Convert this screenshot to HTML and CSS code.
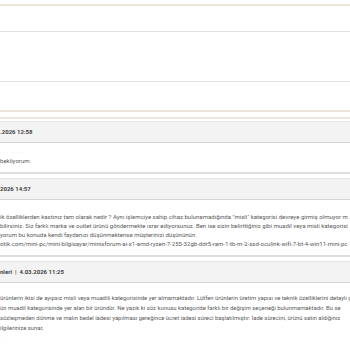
FILE: index.html
```html
<!DOCTYPE html>
<html lang="tr">
<head>
  <meta charset="UTF-8" />
  <title>Yorumlar</title>
  <link rel="stylesheet" href="styles.css">
</head>
<body>

  <!-- Reply form -->
  <div class="reply-form">
    <div class="line-beige"></div>
    <div class="field field-top"></div>
    <div class="field field-tall"></div>
    <div class="field field-last"></div>
    <div class="line-beige"></div>
    <div class="gap"></div>
    <div class="line-beige"></div>
  </div>

  <!-- Messages -->
  <div class="message first">
    <div class="msg-head">.2026 12:58</div>
    <div class="msg-body">
      <p class="quote">. . . . . . . .</p>
      <p>bekliyorum.</p>
    </div>
  </div>

  <div class="message">
    <div class="msg-head">2026 14:57</div>
    <div class="msg-body tight">
      <p class="quote">&nbsp;</p>
      <p>ik özelliklerden kastınız tam olarak nedir ? Aynı işlemciye sahip cihaz bulunamadığında "misli" kategorisi devreye girmiş olmuyor m</p>
      <p>bilirsiniz. Siz farklı marka ve outlet ürünü göndermekte ısrar ediyorsunuz. Ben ise sizin belirttiğiniz gibi muadil veya misli kategorisi</p>
      <p>yorum bu konuda kendi faydanızı düşünmektense müşterinizi düşününün.</p>
      <p>otik.com/mini-pc/mini-bilgisayar/minisforum-ai-x1-amd-ryzen-7-255-32gb-ddr5-ram-1-tb-m-2-ssd-oculink-wifi-7-bt-4-win11-mini-pc</p>
    </div>
  </div>

  <div class="message">
    <div class="msg-head">nleri &nbsp;|&nbsp; 4.03.2026 11:25</div>
    <div class="msg-body wide">
      <p>ürünlerin ikisi de ayıpsız misli veya muadili kategorisinde yer almamaktadır. Lütfen ürünlerin üretim yapısı ve teknik özelliklerini detaylı g</p>
      <p>ün muadil kategorisinde yer alan bir üründür. Ne yazık ki söz konusu kategoride farklı bir değişim seçeneği bulunmamaktadır. Bu se</p>
      <p>sözleşmeden dönme ve malın bedel iadesi yapılması gereğince ücret iadesi süreci başlatılmıştır. İade sürecini, ürünü satın aldığınız</p>
      <p>ilgilerinize sunar,</p>
      <p class="quote">-</p>
    </div>
  </div>

</body>
</html>
```

FILE: styles.css
```css
body {
  margin: 0;
  font-family: Roboto, "Open Sans", sans-serif;
  background: #fff;
  overflow: hidden;
}
.reply-form {
  padding-top: 4px;
}
.line-beige {
  height: 2px;
  background: #efe5db;
}
.field {
  border-bottom: 1px solid #e2e2e2;
}
.field-top {
  height: 25px;
}
.field-tall {
  height: 49px;
}
.field-last {
  border-bottom: none;
  height: 28px;
}
.gap {
  height: 5px;
}
.message {
  border-top: 1px solid #e6e6e6;
  margin-top: 4px;
  border-bottom: 2px solid #dedede;
}
.message.first {
  margin-top: 2px;
}
.msg-head {
  background: #f3f3f3;
  border-bottom: 1px solid #d6d6d6;
  height: 20px;
  line-height: 20px;
  font-size: 6px;
  font-weight: bold;
  color: #444;
  white-space: nowrap;
  overflow: hidden;
}
.msg-body {
  padding: 3px 0 7px;
  font-size: 6.05px;
  color: #5a5a5a;
  overflow: hidden;
}
.msg-body p {
  margin: 0;
  line-height: 9.5px;
  white-space: nowrap;
}
.msg-body.tight p {
  line-height: 9px;
}
.msg-body.wide {
  padding-top: 10px;
  font-size: 5.9px;
}
.msg-body.wide p {
  line-height: 10px;
}
.msg-body .quote {
  color: #e4e4e4;
}
```
